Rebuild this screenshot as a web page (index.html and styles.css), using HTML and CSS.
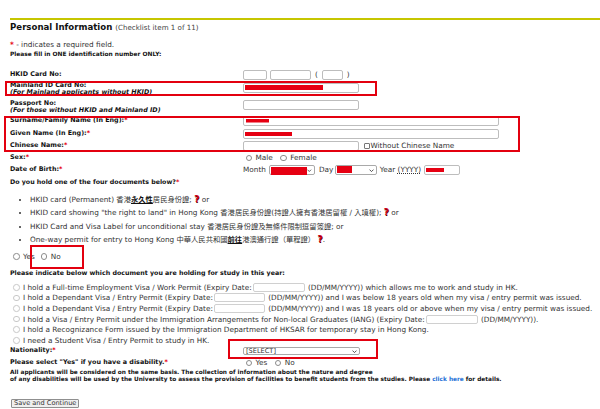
FILE: index.html
```html
<!DOCTYPE html>
<html lang="en">
<head>
  <meta charset="UTF-8">
  <title>Personal Information</title>
  <link rel="stylesheet" href="styles.css">
</head>
<body>
<div class="page">
  <h1 class="title">Personal Information <span>(Checklist item 1 of 11)</span></h1>
  <p class="note"><span class="req">*</span> - indicates a required field.</p>
  <p class="hint">Please fill in ONE identification number ONLY:</p>

  <div class="form">
    <div class="row">
      <span class="label">HKID Card No:</span>
      <span class="field">
        <input class="inp w24"><input class="inp w41"><span class="paren">(</span><input class="inp w21"><span class="paren">)</span>
      </span>
    </div>
    <div class="row tall">
      <span class="label">Mainland ID Card No:<br><i>(For Mainland applicants without HKID)</i></span>
      <span class="field"><input class="inp w116 rd-mainland"></span>
    </div>
    <div class="row tall pass">
      <span class="label">Passport No:<br><i>(For those without HKID and Mainland ID)</i></span>
      <span class="field"><input class="inp w116"></span>
    </div>
    <div class="row">
      <span class="label">Surname/Family Name (In Eng):<span class="req">*</span></span>
      <span class="field"><input class="inp w256 rd-surname"></span>
    </div>
    <div class="row">
      <span class="label">Given Name (In Eng):<span class="req">*</span></span>
      <span class="field"><input class="inp w256 rd-given"></span>
    </div>
    <div class="row">
      <span class="label">Chinese Name:<span class="req">*</span></span>
      <span class="field">
        <input class="inp w116">
        <label class="check"><input type="checkbox" class="cb">Without Chinese Name</label>
      </span>
    </div>
    <div class="row">
      <span class="label">Sex:<span class="req">*</span></span>
      <span class="field">
        <label class="radio"><input type="radio" class="rad" name="sex">Male</label>
        <label class="radio"><input type="radio" class="rad" name="sex">Female</label>
      </span>
    </div>
    <div class="row">
      <span class="label">Date of Birth:<span class="req">*</span></span>
      <span class="field dob">
        <span>Month</span>
        <span class="select w46"><i class="redact rd-month"></i><svg class="chev" viewBox="0 0 6 4"><path d="M0.6 0.6 L3 3 L5.4 0.6"/></svg></span>
        <span class="day">Day</span>
        <span class="select w42"><i class="redact rd-day"></i><svg class="chev" viewBox="0 0 6 4"><path d="M0.6 0.6 L3 3 L5.4 0.6"/></svg></span>
        <span>Year <u>(YYYY)</u></span>
        <input class="inp w36 rd-year">
      </span>
    </div>
  </div>

  <p class="q">Do you hold one of the four documents below?<span class="req">*</span></p>
  <ul class="docs">
    <li>HKID card (Permanent) 香港<b class="u">永久性</b>居民身份證; <span class="help">?</span> or</li>
    <li>HKID card showing "the right to land" in Hong Kong 香港居民身份證(持證人擁有香港居留權 / 入境權); <span class="help">?</span> or</li>
    <li>HKID Card and Visa Label for unconditional stay 香港居民身份證及無條件限制逗留簽證; or</li>
    <li>One-way permit for entry to Hong Kong 中華人民共和國<b class="u">前往</b>港澳通行證（單程證） <span class="help">?</span>.</li>
  </ul>
  <div class="yn">
    <label class="radio"><input type="radio" class="rad" name="hold">Yes</label>
    <label class="radio"><input type="radio" class="rad" name="hold">No</label>
  </div>

  <p class="q indicate">Please indicate below which document you are holding for study in this year:</p>
  <div class="opts">
    <label class="opt"><input type="radio" class="rad" name="doc">I hold a Full-time Employment Visa / Work Permit (Expiry Date:<input class="inp date w52"> (DD/MM/YYYY)) which allows me to work and study in HK.</label>
    <label class="opt"><input type="radio" class="rad" name="doc">I hold a Dependant Visa / Entry Permit (Expiry Date:<input class="inp date w51"> (DD/MM/YYYY)) and I was below 18 years old when my visa / entry permit was issued.</label>
    <label class="opt"><input type="radio" class="rad" name="doc">I hold a Dependant Visa / Entry Permit (Expiry Date:<input class="inp date w51"> (DD/MM/YYYY)) and I was 18 years old or above when my visa / entry permit was issued.</label>
    <label class="opt"><input type="radio" class="rad" name="doc">I hold a Visa / Entry Permit under the Immigration Arrangements for Non-local Graduates (IANG) (Expiry Date:<input class="inp date w52"> (DD/MM/YYYY)).</label>
    <label class="opt"><input type="radio" class="rad" name="doc">I hold a Recognizance Form issued by the Immigration Department of HKSAR for temporary stay in Hong Kong.</label>
    <label class="opt"><input type="radio" class="rad" name="doc">I need a Student Visa / Entry Permit to study in HK.</label>
  </div>

  <div class="row nat">
    <span class="label">Nationality:<span class="req">*</span></span>
    <span class="field"><span class="select w117">[SELECT]<svg class="chev" viewBox="0 0 6 4"><path d="M0.6 0.6 L3 3 L5.4 0.6"/></svg></span></span>
  </div>
  <div class="row dis">
    <span class="label">Please select "Yes" if you have a disability.<span class="req">*</span></span>
    <span class="field">
      <label class="radio"><input type="radio" class="rad" name="dis">Yes</label>
      <label class="radio"><input type="radio" class="rad" name="dis">No</label>
    </span>
  </div>
  <p class="final">All applicants will be considered on the same basis. The collection of information about the nature and degree<br>of any disabilities will be used by the University to assess the provision of facilities to benefit students from the studies. Please <a href="#">click here</a> for details.</p>

  <button class="btn">Save and Continue</button>

  <!-- red annotation boxes drawn over the form -->
  <div class="mark m-mainland"></div>
  <div class="mark m-names"></div>
  <div class="mark m-yn"></div>
  <div class="mark m-nat"></div>
</div>
</body>
</html>
```

FILE: styles.css
```css
* {
  box-sizing: border-box;
}

body {
  margin: 0;
  background: #fff;
  color: #333;
  font-family: "DejaVu Sans", "Noto Sans CJK TC", sans-serif;
  font-size: 7.3px;
  line-height: 8px;
}

.page {
  position: relative;
  width: 600px;
  height: 409px;
  padding: 18px 0 0 10px;
  overflow: hidden;
}

p {
  margin: 0;
}

.title {
  margin: 0;
  padding-top: 1.5px;
  border-top: 2px solid #c6c600;
  font-size: 8.6px;
  line-height: 11px;
  color: #111;
}

.title span {
  font-weight: normal;
  font-size: 7.1px;
  color: #444;
}

.req {
  color: #e60012;
  font-weight: bold;
}

.note {
  margin-top: 8.5px;
}

.hint {
  margin-top: 1px;
  font-weight: bold;
  font-size: 5.9px;
  color: #111;
}

/* label / field rows */
.form {
  margin-top: 10.85px;
}

.row {
  display: grid;
  grid-template-columns: 233px auto;
  align-items: center;
  height: 12.3px;
}

.label {
  font-weight: bold;
  font-size: 6.4px;
  line-height: 8px;
  padding-bottom: 2px;
  color: #111;
  white-space: nowrap;
}

.row.tall {
  align-items: start;
  height: 18px;
}

.row.tall .label {
  line-height: 7.3px;
  padding: 1px 0 0;
}

.row.tall .field {
  padding-top: 1.5px;
}

.row.pass {
  height: 16px;
}

.row.pass .field {
  padding-top: 0.5px;
}

.field {
  display: flex;
  align-items: center;
  gap: 3px;
  white-space: nowrap;
}

.paren {
  margin: 0 1px;
}

.inp {
  height: 10px;
  margin: 0;
  padding: 0;
  border: 1px solid #bdbdbd;
  border-radius: 2px;
  background: #fff;
  font-size: 7px;
}

.w21 { width: 21px; }
.w24 { width: 24px; }
.w36 { width: 36px; }
.w41 { width: 41px; }
.w42 { width: 42px; }
.w46 { width: 46px; }
.w51 { width: 51px; }
.w52 { width: 52px; }
.w116 { width: 116px; }
.w117 { width: 117px; }
.w256 { width: 256px; }

/* redacted values */
.rd-mainland { background: linear-gradient(#e60012, #e60012) 1px 1.5px / 78px 5px no-repeat #fff; }
.rd-surname { background: linear-gradient(#e60012, #e60012) 1.5px 2px / 23px 3.5px no-repeat #fff; }
.rd-given { background: linear-gradient(#e60012, #e60012) 1px 2px / 47px 4px no-repeat #fff; }
.rd-year { background: linear-gradient(#e60012, #e60012) 1px 2px / 18px 4px no-repeat #fff; }

.redact {
  display: block;
  background: #e60012;
}

.rd-month {
  width: 40px;
  height: 8px;
  margin-top: 1px;
}

.rd-day {
  width: 15px;
  height: 7px;
  margin-top: -2px;
}

.select {
  display: inline-flex;
  align-items: center;
  height: 10px;
  padding: 0 2px 0 1px;
  border: 1px solid #a9a9a9;
  border-radius: 2px;
  background: #fff;
  color: #333;
}

.chev {
  width: 5px;
  height: 3.5px;
  margin-left: auto;
  fill: none;
  stroke: #333;
  stroke-width: 1;
}

.dob .day {
  margin-left: 1px;
  margin-right: -1.5px;
}

.dob u {
  text-decoration-style: dotted;
}

.check {
  display: flex;
  align-items: center;
  margin-left: 2px;
}

.cb {
  appearance: none;
  width: 5.5px;
  height: 5.5px;
  margin: 0 1px 0 0;
  border: 1px solid #777;
  border-radius: 1px;
  background: #fff;
}

.radio {
  display: inline-flex;
  align-items: center;
  gap: 3.5px;
  margin-left: 2.5px;
  margin-right: 2px;
}

.rad {
  appearance: none;
  width: 6.5px;
  height: 6.5px;
  margin: 0;
  border: 1px solid #8c8c8c;
  border-radius: 50%;
  background: #fff;
}

.q {
  margin-top: 1.6px;
  font-weight: bold;
  font-size: 6.3px;
  color: #111;
}

.docs {
  margin: 7.15px 0 0;
  padding-left: 20px;
  line-height: 13.1px;
  white-space: nowrap;
}

.u {
  text-decoration: underline;
  color: #111;
}

.help {
  color: #d0001a;
  font-weight: bold;
  font-size: 9px;
  text-shadow: 0.5px 0.5px 0 #5a0000;
}

.yn {
  margin-top: 5.85px;
  line-height: 10px;
  display: flex;
  align-items: center;
  height: 10px;
}

.yn .radio {
  margin-left: 3px;
  margin-right: 3px;
}

.indicate {
  margin-top: 7px;
}

.opts {
  margin-top: 6.25px;
}

.opt {
  display: block;
  height: 10.6px;
  line-height: 10.6px;
  white-space: nowrap;
}

.opt .rad {
  vertical-align: middle;
  margin: -1px 3.5px 0 3px;
  border-color: #c8c8c8;
}

.opt .date {
  height: 9px;
  vertical-align: middle;
  margin: -1px 1px 0 1px;
  border-color: #d0d0d0;
}

.nat {
  height: 9.5px;
}

.nat .select {
  height: 8px;
  padding-left: 2px;
  font-size: 6.6px;
}

.dis {
  margin-top: 1.25px;
  height: 12px;
}

.final {
  font-weight: bold;
  font-size: 5.8px;
  line-height: 7.3px;
  color: #111;
  white-space: nowrap;
}

.final a {
  color: #1d70d6;
  text-decoration: none;
}

.btn {
  display: block;
  margin: 15.4px 0 0 1px;
  height: 8.5px;
  padding: 0 2px;
  border: 1px solid #8f8f8f;
  border-radius: 1px;
  background: #efefef;
  color: #333;
  font-family: "DejaVu Sans", sans-serif;
  font-size: 6.6px;
  line-height: 6px;
}

.mark {
  position: absolute;
  border: 2px solid #e3000f;
}

.m-mainland { left: 5px; top: 80.5px; width: 372px; height: 15px; }
.m-names { left: 4px; top: 116px; width: 516px; height: 35.5px; }
.m-yn { left: 30px; top: 245px; width: 54px; height: 23.5px; }
.m-nat { left: 228px; top: 338.5px; width: 150px; height: 20px; }
```
